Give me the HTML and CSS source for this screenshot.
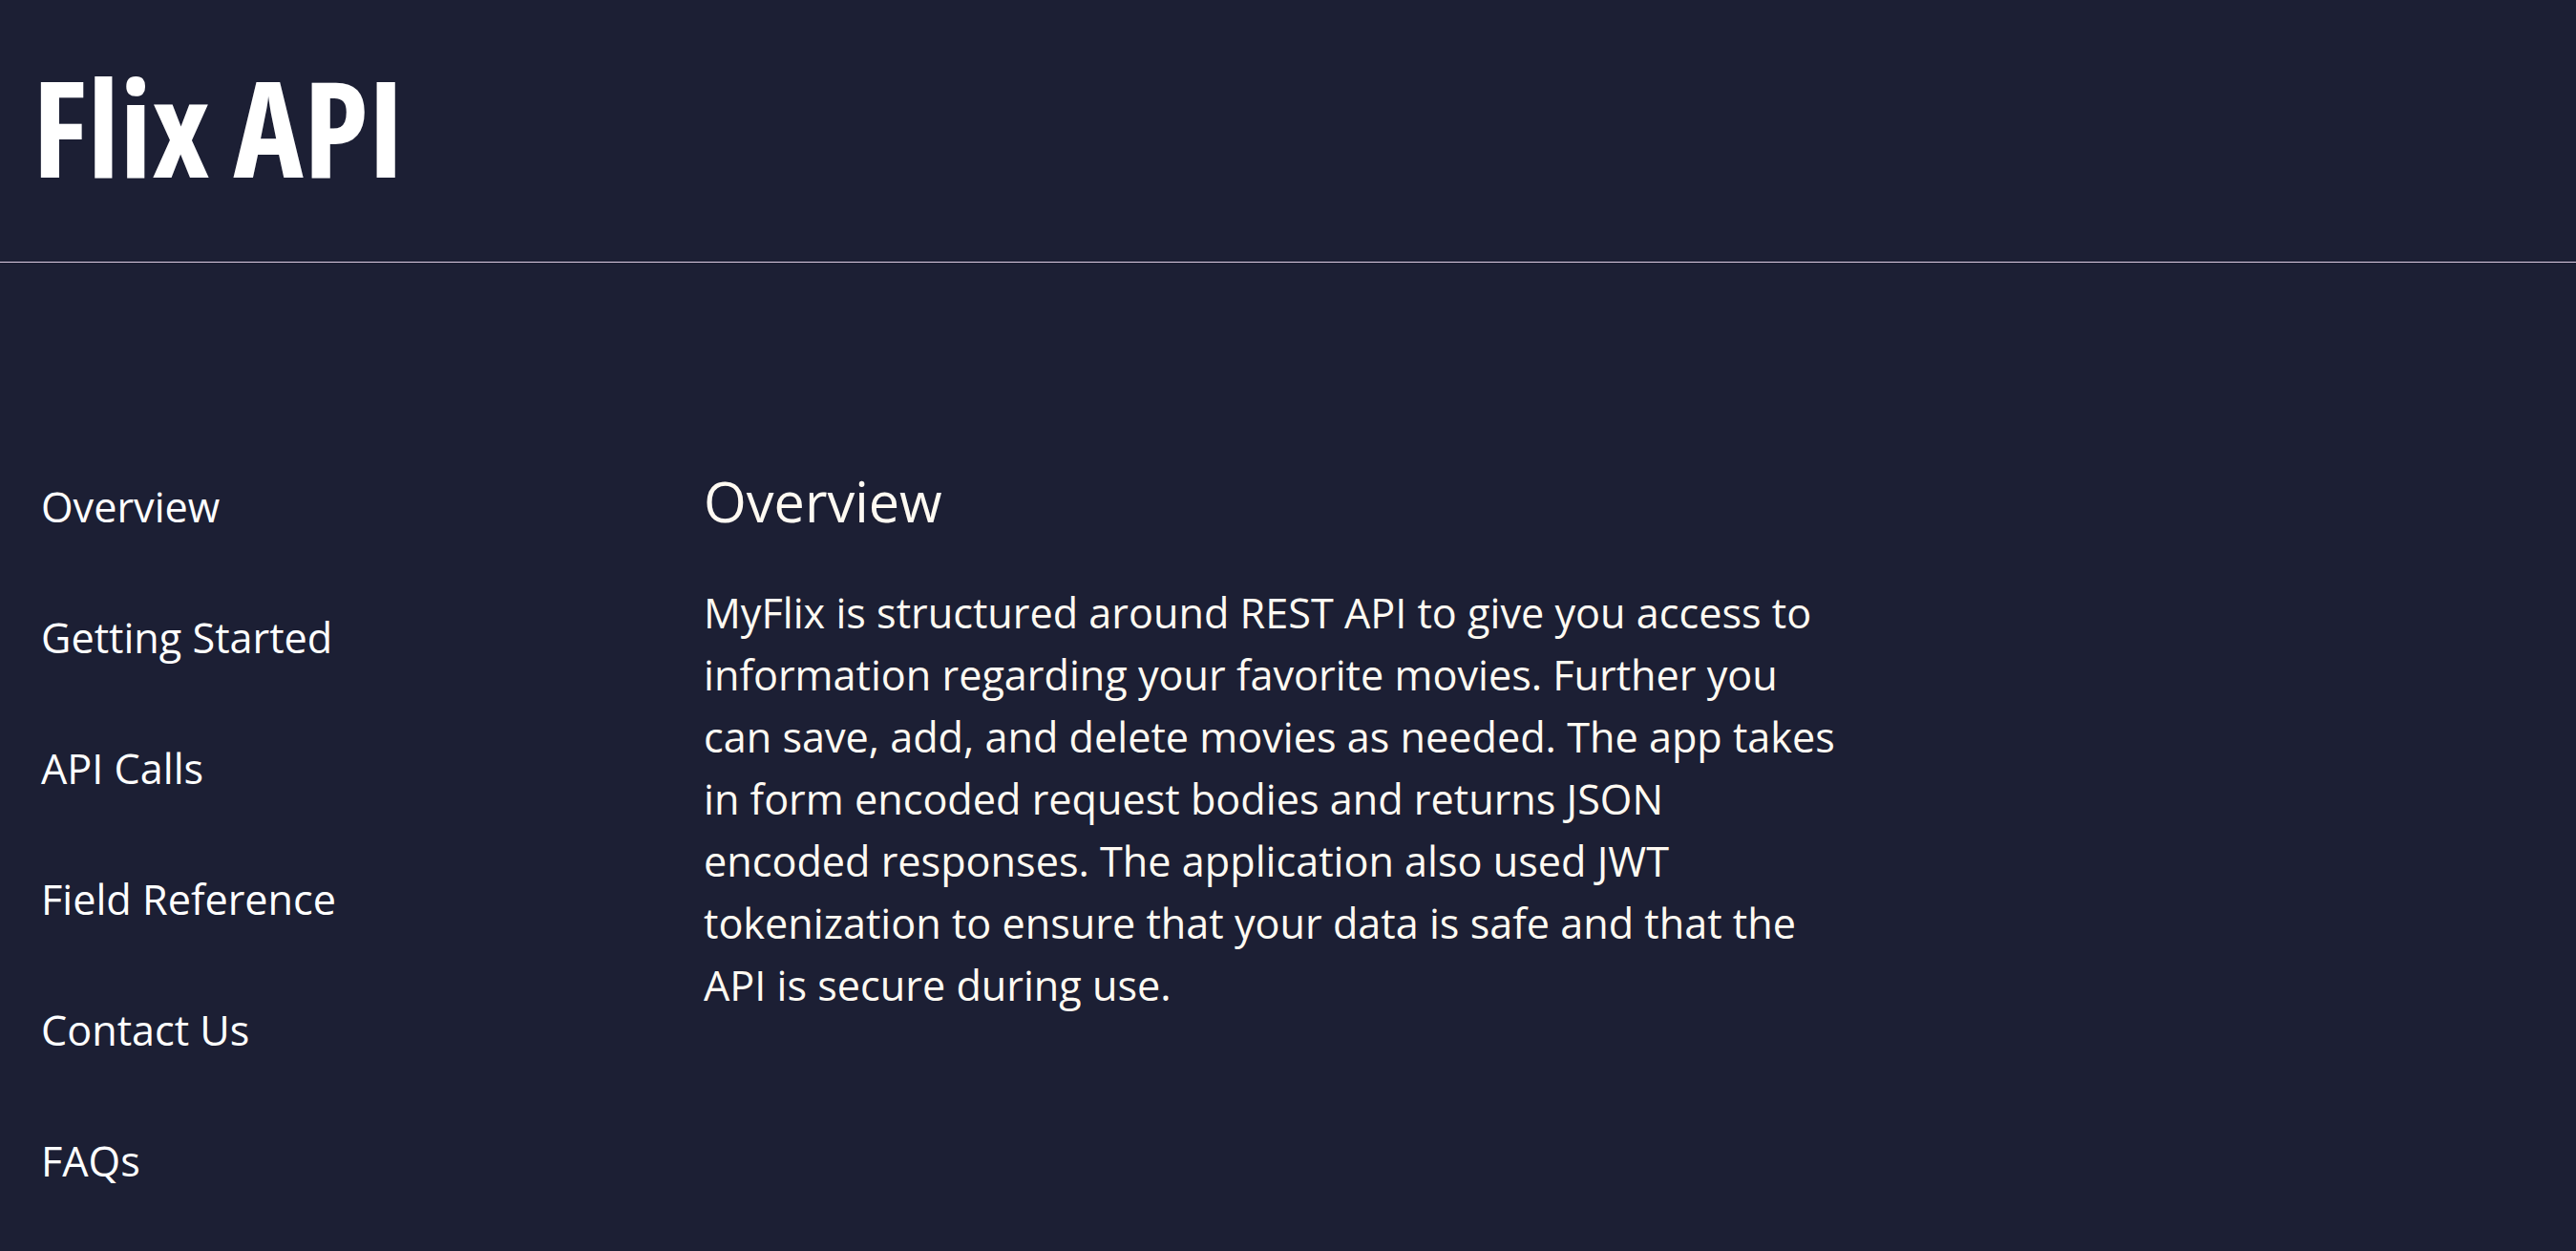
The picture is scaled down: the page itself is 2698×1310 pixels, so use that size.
FILE: index.html
```html
<!DOCTYPE html>
<html lang="en">
<head>
<meta charset="utf-8">
<title>Flix API</title>
<link rel="stylesheet" href="styles.css">
</head>
<body>
<header class="site-header">
  <h1 class="logo">Flix API</h1>
</header>
<div class="layout">
  <nav class="sidebar">
    <a class="nav-link" href="#overview">Overview</a>
    <a class="nav-link" href="#getting-started">Getting Started</a>
    <a class="nav-link" href="#api-calls">API Calls</a>
    <a class="nav-link" href="#field-reference">Field Reference</a>
    <a class="nav-link" href="#contact">Contact Us</a>
    <a class="nav-link" href="#faqs">FAQs</a>
  </nav>
  <main class="content">
    <section id="overview" class="section">
      <h2 class="section-title">Overview</h2>
      <p class="section-text">MyFlix is structured around REST API to give you access to information regarding your favorite movies. Further you can save, add, and delete movies as needed. The app takes in form encoded request bodies and returns JSON encoded responses. The application also used JWT tokenization to ensure that your data is safe and that the API is secure during use.</p>
    </section>
  </main>
</div>
</body>
</html>
```
FILE: styles.css
```css
html, body {
  margin: 0;
  padding: 0;
  background: #1c1f34;
  color: #fffaf2;
  font-family: "Open Sans", "Noto Sans", sans-serif;
}

.site-header {
  height: 274px;
  border-bottom: 1px solid #dccbe2;
  padding-left: 34px;
  box-sizing: content-box;
  display: flex;
  align-items: flex-start;
}

.logo {
  margin: 0;
  padding-top: 63px;
  font-size: 139px;
  line-height: 1;
  font-weight: 700;
  font-stretch: 75%;
  letter-spacing: 0;
  color: #ffffff;
}

.layout {
  display: flex;
  padding-top: 212px;
}

.sidebar {
  width: 694px;
  padding-left: 43px;
  padding-top: 14px;
  display: flex;
  flex-direction: column;
  gap: 77px;
  flex-shrink: 0;
}

.nav-link {
  color: #ffffff;
  text-decoration: none;
  font-size: 43.2px;
  line-height: 60px;
}

.content {
  flex: 1;
}

.section-title {
  margin: 0;
  font-size: 57.6px;
  font-weight: 400;
  line-height: 76px;
}

.section-text {
  margin: 46px 0 0;
  max-width: 1190px;
  font-size: 43.2px;
  line-height: 65px;
}
```
